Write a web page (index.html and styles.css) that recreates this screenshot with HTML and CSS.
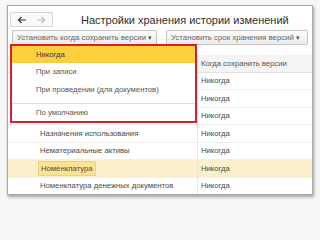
FILE: index.html
```
<!DOCTYPE html>
<html lang="ru">
<head>
<meta charset="utf-8">
<link rel="stylesheet" href="styles.css">
</head>
<body>
<div class="window">
  <div class="head">
    <div class="nav">
      <svg class="arrow" width="10" height="8" viewBox="0 0 10 8"><path d="M9 4H1.5M4.5 1L1.5 4L4.5 7" fill="none" stroke="#333" stroke-width="1.2"/></svg>
      <svg class="arrow" width="10" height="8" viewBox="0 0 10 8"><path d="M1 4H8.5M5.5 1L8.5 4L5.5 7" fill="none" stroke="#b8b8b8" stroke-width="1.2"/></svg>
    </div>
    <div class="title">Настройки хранения истории изменений</div>
  </div>
  <div class="toolbar">
    <div class="btn btn1">Установить когда сохранить версии <span class="caret">▾</span></div>
    <div class="btn btn2">Установить срок хранения версий <span class="caret">▾</span></div>
  </div>
  <div class="table">
    <div class="row header"><div class="c1"></div><div class="c2">Когда сохранить версии</div></div>
    <div class="row"><div class="c1"></div><div class="c2">Никогда</div></div>
    <div class="row"><div class="c1"></div><div class="c2">Никогда</div></div>
    <div class="row"><div class="c1"></div><div class="c2">Никогда</div></div>
    <div class="row"><div class="c1">Назначения использования</div><div class="c2">Никогда</div></div>
    <div class="row"><div class="c1">Нематериальные активы</div><div class="c2">Никогда</div></div>
    <div class="row current"><div class="c1"><span class="cell">Номенклатура</span></div><div class="c2">Никогда</div></div>
    <div class="row"><div class="c1">Номенклатура денежных документов</div><div class="c2">Никогда</div></div>
    <div class="menu">
      <div class="item sel">Никогда</div>
      <div class="item">При записи</div>
      <div class="item">При проведении (для документов)</div>
      <div class="sep"></div>
      <div class="item last">По умолчанию</div>
    </div>
  </div>
</div>
</body>
</html>
```
FILE: styles.css
```
html, body {
  margin: 0;
  padding: 0;
}
body {
  width: 320px;
  height: 200px;
  background: #f6f6f6;
  font-family: "Liberation Sans", Arial, sans-serif;
  overflow: hidden;
}
.window {
  margin: 5px 7px 0 7px;
  height: 188px;
  background: #fff;
  border: 1px solid #a9a9a9;
  box-shadow: 1px 2px 3px rgba(0,0,0,0.35);
  overflow: hidden;
}
.head {
  display: flex;
  align-items: center;
  height: 21px;
  padding-top: 3px;
}
.nav {
  margin-left: 2px;
  width: 37px;
  height: 13px;
  border: 1px solid #d6d6d6;
  background: #fafafa;
  display: flex;
  align-items: center;
  justify-content: space-around;
  padding: 0 2px;
  box-sizing: content-box;
}
.arrow { display: block; }
.title {
  margin-left: 28px;
  font-size: 11px;
  color: #2e2e2e;
  white-space: nowrap;
}
.toolbar {
  display: flex;
  gap: 9px;
  padding-left: 4px;
}
.btn {
  height: 13px;
  border: 1px solid #c4c4c4;
  border-radius: 2px;
  background: linear-gradient(#fdfdfd, #ececec);
  font-size: 7.8px;
  color: #666;
  line-height: 13px;
  padding: 0 4px;
  white-space: nowrap;
}
.btn1 { width: 135px; }
.btn2 { width: 132px; }
.caret { color: #555; font-size: 7px; }
.table {
  position: relative;
  margin-top: 10px;
  font-size: 7.7px;
  color: #4a4a4a;
}
.row {
  display: flex;
  height: 17.5px;
  align-items: center;
  border-bottom: 1px solid #efefef;
  box-sizing: border-box;
}
.row.header {
  background: #f4f4f4;
  color: #555;
  border-bottom: 1px solid #e2e2e2;
}
.c1 {
  width: 189px;
  padding-left: 32px;
  box-sizing: border-box;
  white-space: nowrap;
  overflow: hidden;
}
.c2 {
  flex: 1;
  padding-left: 3px;
  border-left: 1px solid #e6e6e6;
  height: 100%;
  display: flex;
  align-items: center;
  white-space: nowrap;
}
.row.current { background: #fcf0cc; }
.cell {
  display: inline-block;
  margin-left: -2px;
  padding: 2px 2px;
  background: #fbe391;
  border: 1px solid #eed27a;
}
.menu {
  position: absolute;
  left: 2px;
  top: -11px;
  width: 183px;
  background: #fff;
  border: 2px solid #d5212e;
  color: #555;
}
.item {
  height: 18px;
  line-height: 18px;
  padding-left: 24px;
  white-space: nowrap;
}
.item.sel {
  background: #fbcf3e;
  color: #3a3a3a;
  height: 17px;
  line-height: 17px;
}
.sep {
  height: 1px;
  background: #dcdcdc;
  margin: 4px 0 0 0;
}
.item.last { height: 17px; line-height: 17px; }
```
